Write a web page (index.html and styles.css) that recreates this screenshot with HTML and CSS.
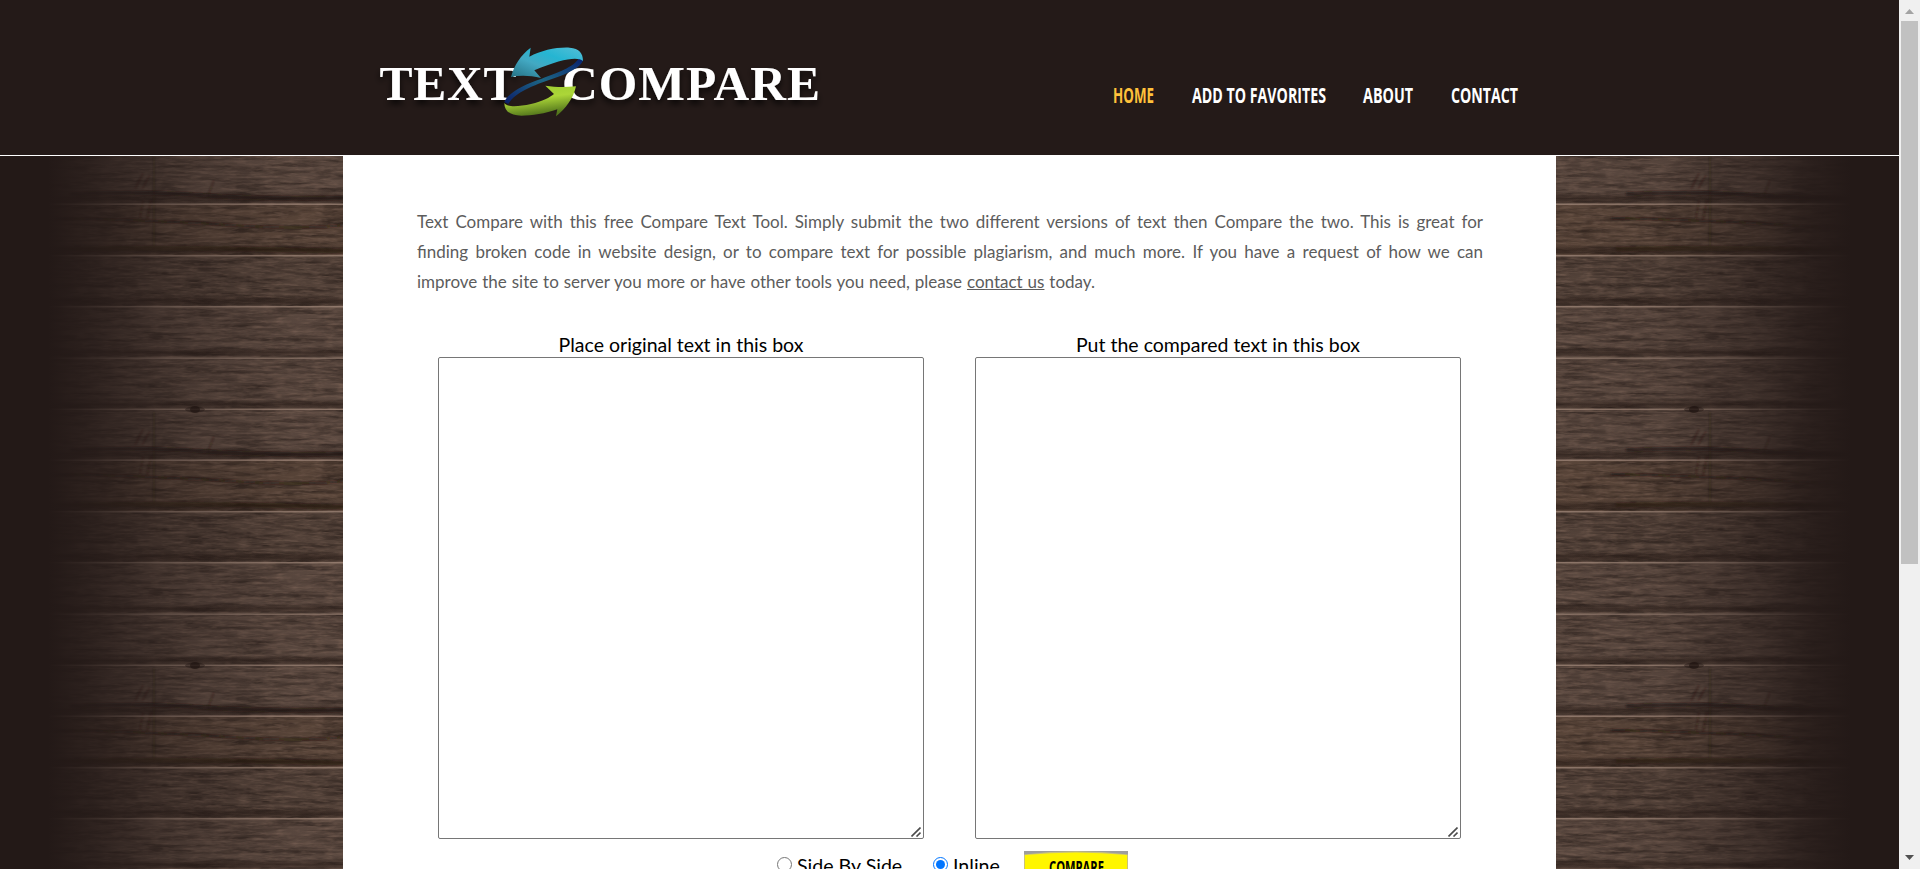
FILE: index.html
```html
<!DOCTYPE html>
<html lang="en">
<head>
<meta charset="utf-8">
<title>Text Compare</title>
<link rel="stylesheet" href="styles.css">
</head>
<body>
<div class="page">
  <header class="header">
    <div class="header-inner">
      <svg class="logo" width="480" height="120" viewBox="0 0 480 120" role="img" aria-label="Text Compare">
        <defs>
          <linearGradient id="blue" x1="0" y1="1" x2="1" y2="0"><stop offset="0" stop-color="#246f82"/><stop offset=".4" stop-color="#43a9c3"/><stop offset=".65" stop-color="#25b5d2"/><stop offset="1" stop-color="#55bfd7"/></linearGradient>
          <linearGradient id="green" x1="0" y1="0" x2=".3" y2="1"><stop offset="0" stop-color="#9acb30"/><stop offset=".5" stop-color="#acd638"/><stop offset="1" stop-color="#53761c"/></linearGradient>
          <linearGradient id="ring" x1="0" y1="1" x2="1" y2="0"><stop offset="0" stop-color="#0b1c68"/><stop offset=".5" stop-color="#1d6685"/><stop offset="1" stop-color="#071f6e"/></linearGradient>
          <filter id="soft" x="-10%" y="-30%" width="120%" height="170%"><feDropShadow dx="0" dy="4" stdDeviation="3" flood-color="#000" flood-opacity=".75"/></filter>
        </defs>
        <g class="logo-text" filter="url(#soft)">
          <text x="19.5" y="69.5" textLength="137" lengthAdjust="spacing">TEXT</text>
          <text x="202" y="69.5" textLength="258" lengthAdjust="spacing">COMPARE</text>
        </g>
        <g transform="scale(.33333)">
          <path d="M669 92C660 112 625 130 578 146C520 166 466 186 445 222L433 216C446 186 492 164 545 146C602 126 650 106 657 82Z" fill="url(#ring)"/>
          <path d="M453 141C462 105 483 75 512 53L508 80C545 61 590 51 629 53C658 55 669 70 669 93C653 79 604 87 523 121L543 144C510 136 480 135 453 141Z" fill="url(#blue)"/>
          <path d="M433 219C440 232 476 230 513 222C548 214 570 202 582 192L556 167C590 172 618 171 648 169C640 205 618 236 588 259L592 238C556 251 516 257 484 257C449 256 433 243 433 219Z" fill="url(#green)"/>
        </g>
      </svg>
      <nav class="nav">
        <a><svg width="41" height="24"><text class="active" x="0" y="18" textLength="41" lengthAdjust="spacingAndGlyphs">HOME</text></svg></a>
        <a><svg width="134" height="24"><text x="0" y="18" textLength="134" lengthAdjust="spacingAndGlyphs">ADD TO FAVORITES</text></svg></a>
        <a><svg width="50" height="24"><text x="0" y="18" textLength="50" lengthAdjust="spacingAndGlyphs">ABOUT</text></svg></a>
        <a><svg width="67" height="24"><text x="0" y="18" textLength="67" lengthAdjust="spacingAndGlyphs">CONTACT</text></svg></a>
      </nav>
    </div>
  </header>
  <div class="body">
    <svg class="wood" width="343" height="713">
      <defs>
        <filter id="grain" x="0" y="0" width="100%" height="100%" color-interpolation-filters="sRGB">
          <feTurbulence type="fractalNoise" baseFrequency=".022 .22" numOctaves="4" seed="8"/>
          <feColorMatrix values="0 0 0 0 .09  0 0 0 0 .06  0 0 0 0 .05  1.1 0 0 0 -.4"/>
        </filter>
        <filter id="glow" x="0" y="0" width="100%" height="100%" color-interpolation-filters="sRGB">
          <feTurbulence type="fractalNoise" baseFrequency=".08 .4" numOctaves="3" seed="3"/>
          <feColorMatrix values="0 0 0 0 .55  0 0 0 0 .44  0 0 0 0 .38  0 .9 0 0 -.38"/>
        </filter>
        <filter id="blur"><feGaussianBlur stdDeviation="1"/></filter>
        <linearGradient id="seam" x1="0" y1="0" x2="0" y2="1"><stop offset="0" stop-color="#1d120e" stop-opacity="0"/><stop offset=".6" stop-color="#1d120e" stop-opacity=".5"/><stop offset="1" stop-color="#1d120e" stop-opacity=".25"/></linearGradient>
        <linearGradient id="fadeL"><stop offset="0" stop-color="#231917"/><stop offset=".14" stop-color="#231917"/><stop offset=".28" stop-color="#231917" stop-opacity=".8"/><stop offset=".5" stop-color="#231917" stop-opacity=".4"/><stop offset=".8" stop-color="#231917" stop-opacity=".08"/><stop offset="1" stop-color="#231917" stop-opacity="0"/></linearGradient>
        <linearGradient id="fadeR"><stop offset="0" stop-color="#231917" stop-opacity="0"/><stop offset=".3" stop-color="#231917" stop-opacity=".1"/><stop offset=".55" stop-color="#231917" stop-opacity=".48"/><stop offset=".75" stop-color="#231917" stop-opacity=".87"/><stop offset=".86" stop-color="#231917"/><stop offset="1" stop-color="#231917"/></linearGradient>
        <g id="tile">
          <rect width="343" height="256" fill="#5b4940"/>
          <rect y="48" width="343" height="51" fill="#594539"/>
          <rect y="99" width="343" height="51" fill="#534239"/>
          <rect width="343" height="256" filter="url(#grain)"/>
          <rect width="343" height="256" filter="url(#glow)"/>
          <g fill="none" stroke="#20130e" filter="url(#blur)">
            <path d="M55 62Q150 64 230 69T343 69" stroke-width="2" opacity=".75"/>
            <path d="M70 38Q150 35 200 39T343 42" stroke-width="4" opacity=".65"/>
            <path d="M60 93Q180 91 343 95" stroke-width="5" opacity=".4"/>
            <path d="M214 24l-6 16M143 17l-8 16M150 19l-8 14M143 44l-3 18M151 44l-4 20M154 0v90" stroke-width="1.500" opacity=".5"/>
          </g>
          <g fill="url(#seam)"><rect y="36" width="343" height="11"/><rect y="88" width="343" height="10"/><rect y="139" width="343" height="10"/><rect y="191" width="343" height="9"/><rect y="243" width="343" height="9"/></g>
          <g fill="#a08779" opacity=".75"><rect y="47.5" width="343" height="1.5"/><rect y="99" width="343" height="1.5"/><rect y="150" width="343" height="1.5"/><rect y="201.5" width="343" height="1.3"/><rect y="252.700" width="343" height="1.3"/></g>
        </g>
        <g id="knot"><ellipse cx="195" cy="253.500" rx="10" ry="3" fill="#1a0f0c" opacity=".4"/><ellipse cx="195" cy="253.500" rx="5" ry="3.500" fill="#1a0f0c" opacity=".6"/></g>
      </defs>
      <use href="#tile"/><use href="#tile" y="256"/><use href="#tile" y="512"/>
      <use href="#knot"/><use href="#knot" y="256"/>
      <rect width="343" height="713" fill="url(#fadeL)"/>
    </svg>
    <main class="content">
      <div class="intro">
        <div class="line full">Text Compare with this free Compare Text Tool. Simply submit the two different versions of text then Compare the two. This is great for</div>
        <div class="line full">finding broken code in website design, or to compare text for possible plagiarism, and much more. If you have a request of how we can</div>
        <div class="line last">improve the site to server you more or have other tools you need, please <a class="link">contact us</a> today.</div>
      </div>
      <div class="boxes">
        <label class="box"><span class="caption">Place original text in this box</span><textarea class="area"></textarea><svg class="grip" width="10" height="10"><path d="M.5 9.500L9.500 .5M5.500 9.500L9.500 5.500"/></svg></label>
        <label class="box"><span class="caption">Put the compared text in this box</span><textarea class="area"></textarea><svg class="grip" width="10" height="10"><path d="M.5 9.500L9.500 .5M5.500 9.500L9.500 5.500"/></svg></label>
      </div>
      <div class="controls">
        <label class="choice side"><input class="radio" type="radio" name="mode"><span>Side By Side</span></label>
        <label class="choice inline"><input class="radio" type="radio" name="mode" checked><span>Inline</span></label>
        <svg class="compare" width="104" height="40">
          <rect width="104" height="40" fill="#c9c27a"/>
          <path d="M0 3.500Q52-3 104 3.500V0H0Z" fill="#9d9d9d"/>
          <path d="M1 4Q52-1 103 4V40H1Z" fill="#fff600"/>
          <text x="25" y="22.500" textLength="55" lengthAdjust="spacingAndGlyphs">COMPARE</text>
        </svg>
      </div>
    </main>
    <svg class="wood" width="343" height="713">
      <use href="#tile"/><use href="#tile" y="256"/><use href="#tile" y="512"/>
      <use href="#knot" x="-57"/><use href="#knot" x="-57" y="256"/>
      <rect width="343" height="713" fill="url(#fadeR)"/>
    </svg>
  </div>
</div>
<aside class="scrollbar">
  <svg width="21" height="21"><path d="M6 14L10.500 9L15 14Z" fill="#a3a3a3"/></svg>
  <div class="thumb"></div>
  <svg class="down" width="21" height="21"><path d="M6 7L10.500 12L15 7Z" fill="#505050"/></svg>
</aside>
</body>
</html>
```
FILE: styles.css
```css
html, body { margin: 0; height: 869px; overflow: hidden; }
body { display: flex; background: #231917; font-family: Lato, "Open Sans", sans-serif; }
.page { width: 1899px; height: 869px; overflow: hidden; }
.header { height: 155px; background: #241a18; border-bottom: 1px solid #fff; }
.header-inner { display: flex; justify-content: space-between; padding: 30px 381px 0 360px; }
.logo { display: block; }
.logo-text { font: bold 49.500px "Liberation Serif", serif; fill: #fff; }
.nav { display: flex; gap: 37.700px; padding-top: 55px; }
.nav svg { display: block; overflow: visible; }
.nav text { font: bold 22px "Open Sans", sans-serif; fill: #fff; }
.nav .active { fill: #ffc13b; }
.body { display: flex; height: 713px; }
.wood { display: block; flex: none; }
.content { width: 1213px; flex: none; background: #fff; overflow: hidden; }
.intro { padding: 51px 73px 0 74px; color: #5c5c5c; font-size: 17px; line-height: 30px; }
.line { white-space: nowrap; }
.full { text-align: justify; text-align-last: justify; }
.last { width: 678px; text-align: justify; text-align-last: justify; }
.link { text-decoration: underline; }
.boxes { display: flex; gap: 51px; padding: 33px 95px 0; }
.box { position: relative; display: flex; flex-direction: column; align-items: center; width: 486px; }
.caption { height: 27px; line-height: 29px; font-size: 19.500px; color: #000; white-space: nowrap; }
.area { box-sizing: border-box; width: 486px; height: 482px; margin: 0; border: 1px solid #767676; border-radius: 2px; resize: none; }
.grip { position: absolute; right: 3px; bottom: 2px; fill: none; stroke: #4c4c4c; stroke-width: 1.600; }
.controls { display: flex; align-items: flex-start; padding: 12px 0 0 434px; font-size: 19.600px; }
.choice { display: flex; align-items: center; gap: 5px; height: 27px; white-space: nowrap; }
.choice span { line-height: 26px; padding-top: 2px; }
.side { width: 156px; }
.inline { width: 91px; }
.radio { width: 15px; height: 15px; margin: 0; flex: none; }
.compare text { font: bold 17px "Open Sans", sans-serif; fill: #000; }
.scrollbar { display: flex; flex-direction: column; width: 21px; height: 869px; background: #f0f0f0; }
.thumb { width: 17px; height: 543px; margin-left: 2px; background: #c1c1c1; }
.scrollbar svg { display: block; flex: none; }
.down { margin-top: auto; }
```
